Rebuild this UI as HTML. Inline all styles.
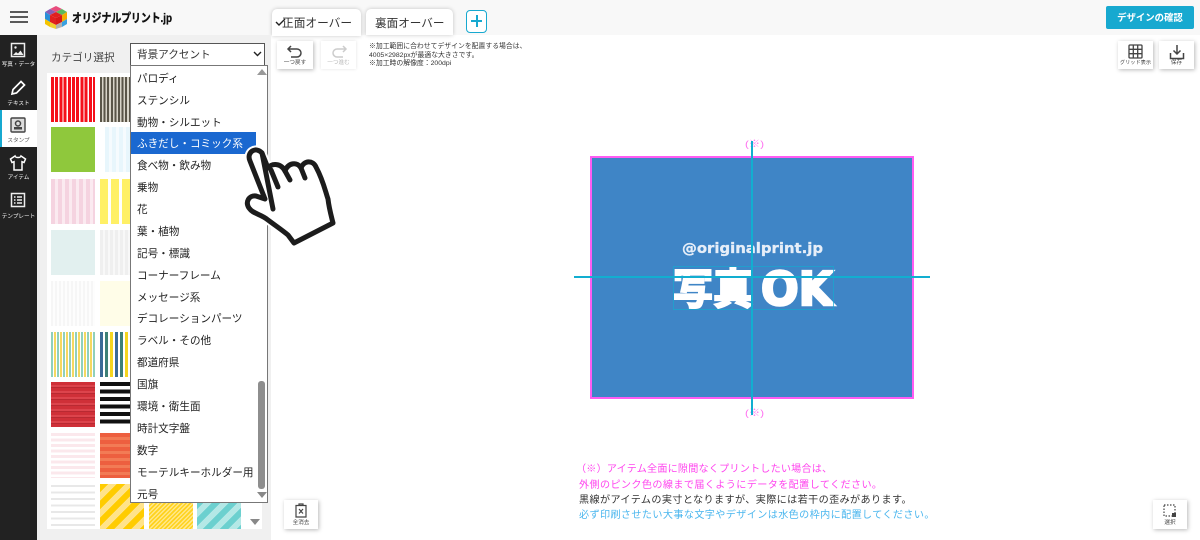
<!DOCTYPE html>
<html lang="ja"><head><meta charset="utf-8"><style>
html,body{margin:0;padding:0;width:1200px;height:540px;overflow:hidden;background:#fff}
body{position:relative;font-family:"Liberation Sans","Noto Sans CJK JP",sans-serif;color:#333}
div,span,svg{position:absolute;box-sizing:border-box}
.t{white-space:nowrap}
.tile{width:44px;height:45px}
.sl{left:0;width:37px;text-align:center;font-size:5.6px;color:#fff;white-space:nowrap;line-height:8px}
.it{left:6px;font-size:10.6px;line-height:14px;white-space:nowrap;color:#222}
.btn{background:#fff;box-shadow:1px 1px 4px rgba(0,0,0,.28);width:35px;height:28px}
.btn span{left:0;width:100%;text-align:center;font-size:5.6px;top:19px;line-height:7px;white-space:nowrap;color:#444}
.note{left:579px;font-size:10.1px;letter-spacing:.39px;line-height:14px;white-space:nowrap}
</style></head><body>
<!-- header -->
<div style="left:0;top:0;width:1200px;height:35px;background:#f8f8f8"></div>
<div style="left:10px;top:11px;width:18px;height:2px;background:#5a5a5a"></div>
<div style="left:10px;top:16px;width:18px;height:2px;background:#5a5a5a"></div>
<div style="left:10px;top:21px;width:18px;height:2px;background:#5a5a5a"></div>
<svg style="left:44px;top:5px" width="24" height="25" viewBox="0 0 24 25">
<polygon points="12,1 18,4 12,7 6,4" fill="#e84c7d"/><polygon points="6,4 12,7 6,10 1,7" fill="#8a5db5"/><polygon points="18,4 23,7 18,10 12,7" fill="#5cb85c"/>
<polygon points="12,7 18,10 12,13 6,10" fill="#e02020"/><polygon points="6,10 12,13 12,20 6,17" fill="#e02020"/><polygon points="18,10 12,13 12,20 18,17" fill="#d81818"/>
<polygon points="1,7 6,10 6,17 1,14" fill="#2a8fd8"/><polygon points="1,14 6,17 6,22 1,19" fill="#f5c400"/><polygon points="23,7 18,10 18,17 23,14" fill="#f5a800"/><polygon points="23,14 18,17 18,22 23,19" fill="#39a0e0"/>
<polygon points="6,17 12,20 12,24 6,22" fill="#f0d030"/><polygon points="18,17 12,20 12,24 18,22" fill="#b0b0b0"/></svg>
<svg style="left:72px;top:8px" width="104" height="20"><text x="0" y="14" font-size="12" font-weight="700" fill="#111" stroke="#111" stroke-width=".35" textLength="100" lengthAdjust="spacingAndGlyphs" font-family="'Liberation Sans','Noto Sans CJK JP',sans-serif">オリジナルプリント.jp</text></svg>
<!-- tabs -->
<div style="left:272px;top:9px;width:89px;height:27px;background:#fff;border-radius:5px 5px 0 0;box-shadow:0 0 4px rgba(0,0,0,.22)"></div>
<div style="left:366px;top:9px;width:87px;height:26px;background:#fff;border-radius:5px 5px 0 0;box-shadow:0 0 4px rgba(0,0,0,.22)"></div>
<svg style="left:275px;top:18px" width="12" height="10"><path d="M1 4l3 3 6-6" stroke="#222" stroke-width="1.4" fill="none"/></svg>
<div class="t" style="left:282px;top:15px;font-size:11.7px;line-height:17px;color:#333">正面オーバー</div>
<div class="t" style="left:375px;top:15px;font-size:11.6px;line-height:17px;color:#333">裏面オーバー</div>
<div style="left:466px;top:10px;width:21px;height:23px;border:1px solid #17a9d0;border-radius:4px;background:#fff"></div>
<div style="left:471px;top:20px;width:11px;height:2px;background:#17a9d0"></div>
<div style="left:476px;top:15px;width:2px;height:12px;background:#17a9d0"></div>
<div class="t" style="left:1106px;top:6px;width:88px;height:23px;background:#17a9d0;border-radius:2px;color:#fff;font-size:9.4px;font-weight:700;text-align:center;line-height:24px">デザインの確認</div>
<!-- left panel -->
<div style="left:37px;top:35px;width:234px;height:505px;background:#f0f0f0"></div>
<div style="left:47px;top:73px;width:215px;height:456px;background:#fff"></div>
<div class="t" style="left:51px;top:51px;font-size:10.6px;line-height:14px;color:#444">カテゴリ選択</div>
<!-- tiles -->
<div class="tile" style="left:51px;top:77px;background:repeating-linear-gradient(90deg,#f5101a 0 3px,#fff 3px 4.2px)"></div>
<div class="tile" style="left:100px;top:77px;background:repeating-linear-gradient(90deg,#5a5548 0 2px,#d8d4c8 2px 3.6px)"></div>
<div class="tile" style="left:51px;top:127px;background:#8fc83c"></div>
<div class="tile" style="left:105px;top:127px;width:39px;background:repeating-linear-gradient(90deg,#e8f6fc 0 4px,#f6fbfe 4px 7px)"></div>
<div class="tile" style="left:51px;top:179px;background:repeating-linear-gradient(90deg,#f5d3e0 0 4px,#fbeaf0 4px 7px)"></div>
<div class="tile" style="left:100px;top:179px;background:repeating-linear-gradient(90deg,#fff066 0 8px,#fff 8px 11px)"></div>
<div class="tile" style="left:51px;top:230px;background:#e2f0ef"></div>
<div class="tile" style="left:100px;top:230px;background:repeating-linear-gradient(90deg,#efefef 0 3px,#f8f8f8 3px 5px)"></div>
<div class="tile" style="left:51px;top:281px;background:repeating-linear-gradient(90deg,#f6f6f6 0 2px,#fdfdfd 2px 4px)"></div>
<div class="tile" style="left:100px;top:281px;background:#fffde8"></div>
<div class="tile" style="left:51px;top:332px;background:repeating-linear-gradient(90deg,#8fd0bc 0 2px,#fff 2px 3px,#f5d860 3px 5px,#fff 5px 6px)"></div>
<div class="tile" style="left:100px;top:332px;background:repeating-linear-gradient(90deg,#3b6a96 0 3px,#fff 3px 5px,#3e8076 5px 8px,#fff 8px 10px,#f5d520 10px 13px,#fff 13px 15px)"></div>
<div class="tile" style="left:51px;top:382px;background:repeating-linear-gradient(0deg,#cf3038 0 3px,#b92a32 3px 4px,#dc444c 4px 6px)"></div>
<div class="tile" style="left:100px;top:382px;background:repeating-linear-gradient(180deg,#111 0 4px,#fff 4px 7.5px)"></div>
<div class="tile" style="left:51px;top:433px;background:repeating-linear-gradient(180deg,#fbe8ec 0 3px,#fff 3px 5.5px)"></div>
<div class="tile" style="left:100px;top:433px;background:repeating-linear-gradient(180deg,#ed5f3f 0 4px,#f27b55 4px 7px)"></div>
<div class="tile" style="left:51px;top:485px;height:44px;background:repeating-linear-gradient(180deg,#e8e8e8 0 2px,#fff 2px 6.5px)"></div>
<div class="tile" style="left:100px;top:484px;background:repeating-linear-gradient(135deg,#ffcc00 0 6px,#ffe38a 6px 12px)"></div>
<div class="tile" style="left:149px;top:484px;background:repeating-linear-gradient(135deg,#ffd21e 0 1.5px,#ffe88a 1.5px 3px)"></div>
<div class="tile" style="left:197px;top:484px;background:repeating-linear-gradient(135deg,#6cd0cf 0 6px,#b4e8e6 6px 12px)"></div>
<svg style="left:250px;top:519px" width="10" height="7"><polygon points="0,0 10,0 5,6" fill="#888"/></svg>
<!-- select -->
<div style="left:130px;top:43px;width:135px;height:23px;background:#fff;border:1px solid #555"></div>
<div class="t" style="left:137px;top:48px;font-size:10.6px;line-height:14px;color:#333">背景アクセント</div>
<svg style="left:253px;top:51px" width="9" height="6"><path d="M1 1l3.5 3.5L8 1" stroke="#222" stroke-width="1.4" fill="none"/></svg>
<!-- dropdown -->
<div style="left:130px;top:65px;width:138px;height:438px;background:#fff;border:1px solid #777;overflow:hidden">
<div style="left:0;top:66px;width:125px;height:22px;background:#1a68d0"></div>
<div class="it" style="top:6px">パロディ</div>
<div class="it" style="top:28px">ステンシル</div>
<div class="it" style="top:50px">動物・シルエット</div>
<div class="it" style="top:71px;color:#fff">ふきだし・コミック系</div>
<div class="it" style="top:93px">食べ物・飲み物</div>
<div class="it" style="top:115px">乗物</div>
<div class="it" style="top:137px">花</div>
<div class="it" style="top:159px">葉・植物</div>
<div class="it" style="top:181px">記号・標識</div>
<div class="it" style="top:203px">コーナーフレーム</div>
<div class="it" style="top:225px">メッセージ系</div>
<div class="it" style="top:246px">デコレーションパーツ</div>
<div class="it" style="top:268px">ラベル・その他</div>
<div class="it" style="top:290px">都道府県</div>
<div class="it" style="top:312px">国旗</div>
<div class="it" style="top:334px">環境・衛生面</div>
<div class="it" style="top:356px">時計文字盤</div>
<div class="it" style="top:378px">数字</div>
<div class="it" style="top:400px">モーテルキーホルダー用</div>
<div class="it" style="top:422px">元号</div>
<div style="left:127px;top:315px;width:7px;height:108px;background:#8e8e8e;border-radius:3px"></div>
<svg style="left:126px;top:3px" width="10" height="7"><polygon points="5,0 10,6 0,6" fill="#999"/></svg>
<svg style="left:126px;top:426px" width="10" height="7"><polygon points="0,0 10,0 5,6" fill="#888"/></svg>
</div>
<!-- sidebar -->
<div style="left:0;top:35px;width:37px;height:505px;background:#222"></div>
<div style="left:0;top:110px;width:37px;height:37px;background:#fff"></div>
<div style="left:0;top:110px;width:2px;height:37px;background:#17a9d0"></div>
<svg style="left:9px;top:41px" width="18" height="18"><rect x="2.5" y="2.5" width="13" height="13" fill="none" stroke="#eee" stroke-width="1.5"/><circle cx="6.5" cy="6.5" r="1.2" fill="#eee"/><path d="M4 14l3-3 2 1.5 2.5-3 3 4.500z" fill="#eee"/></svg>
<div class="sl" style="top:61px">写真・データ</div>
<svg style="left:9px;top:79px" width="18" height="18"><path d="M3 15l1-4.500L12 2.500l3.500 3.500-8 8z" fill="none" stroke="#fff" stroke-width="1.700"/></svg>
<div class="sl" style="top:100px">テキスト</div>
<svg style="left:9px;top:116px" width="18" height="18"><rect x="2" y="2" width="14" height="14" rx="1" fill="#ddd" stroke="#444" stroke-width="1.4"/><circle cx="9" cy="7.500" r="2.500" fill="none" stroke="#444" stroke-width="1.500"/><rect x="5" y="11" width="8" height="2.500" fill="#444"/></svg>
<div class="sl" style="top:137px;color:#555">スタンプ</div>
<svg style="left:9px;top:154px" width="18" height="18"><path d="M6 2L1.500 5l1.500 3.500 2-.8V16h8V7.700l2 .8L16.500 5 12 2c-.5 2-5.500 2-6 0z" fill="none" stroke="#fff" stroke-width="1.500"/></svg>
<div class="sl" style="top:174px">アイテム</div>
<svg style="left:9px;top:191px" width="18" height="18"><rect x="2.500" y="2.500" width="13" height="13" fill="none" stroke="#eee" stroke-width="1.500"/><path d="M5 6h1.500M5 9h1.500M5 12h1.500M8 6h5M8 9h5M8 12h5" stroke="#eee" stroke-width="1.500"/></svg>
<div class="sl" style="top:213px">テンプレート</div>
<!-- tool buttons -->
<div class="btn" style="left:277px;top:41px;width:36px"><svg style="left:9px;top:3px" width="18" height="16"><path d="M5 2L2 5l3 3M2 5h9a3.500 3.500 0 0 1 0 8H5" fill="none" stroke="#444" stroke-width="1.500"/></svg><span>一つ戻す</span></div>
<div class="btn" style="left:321px;top:41px;box-shadow:0 0 3px rgba(0,0,0,.12)"><svg style="left:9px;top:3px" width="18" height="16"><path d="M13 2l3 3-3 3M16 5H7a3.500 3.500 0 0 0 0 8h6" fill="none" stroke="#ccc" stroke-width="1.500"/></svg><span style="color:#bbb">一つ進む</span></div>
<div class="t" style="left:369px;top:43px;font-size:6.85px;line-height:8.600px;color:#333">※加工範囲に合わせてデザインを配置する場合は、<br>4005×2982pxが最適な大きさです。<br>※加工時の解像度：200dpi</div>
<div class="btn" style="left:1118px;top:41px"><svg style="left:10px;top:3px" width="15" height="15"><rect x="1" y="1" width="13" height="13" rx="1" fill="none" stroke="#444" stroke-width="1.300"/><path d="M5.300 1v13M9.700 1v13M1 5.300h13M1 9.700h13" stroke="#444" stroke-width="1.300"/></svg><span style="font-size:5.200px">グリッド表示</span></div>
<div class="btn" style="left:1159px;top:41px"><svg style="left:10px;top:3px" width="16" height="16"><path d="M8 1v9M4.500 6.500L8 10l3.500-3.500M1.500 9v5.500h13V9" fill="none" stroke="#444" stroke-width="1.500"/></svg><span>保存</span></div>
<div class="btn" style="left:284px;top:500px;width:34px;height:29px"><svg style="left:10px;top:3px" width="14" height="15"><path d="M2 2.500h10V14H2zM5 2.500V1h4v1.500M5 6l4 4.500M9 6l-4 4.500" fill="none" stroke="#444" stroke-width="1.200"/></svg><span style="top:20px">全消去</span></div>
<div class="btn" style="left:1153px;top:500px;width:34px;height:29px"><svg style="left:10px;top:4px" width="15" height="15"><rect x="1" y="1" width="11" height="11" fill="none" stroke="#444" stroke-width="1.200" stroke-dasharray="1.500 1.500"/><rect x="9" y="9" width="4" height="4" fill="#444"/></svg><span style="top:20px">選択</span></div>
<!-- design -->
<div style="left:590px;top:156px;width:324px;height:243px;background:#3f85c6;border:2px solid #ff5cf2"></div>
<svg style="left:570px;top:130px" width="370" height="290" font-family="'Liberation Sans','Noto Sans CJK JP',sans-serif">
<text x="175" y="17" font-size="9.500" fill="#ff70f0" textLength="19" lengthAdjust="spacingAndGlyphs">(※)</text>
<text x="175" y="286" font-size="9.500" fill="#ff70f0" textLength="19" lengthAdjust="spacingAndGlyphs">(※)</text>
<text x="112" y="123" font-family="'DejaVu Sans',sans-serif" font-size="14" font-weight="700" fill="#e6eef8" stroke="#e6eef8" stroke-width=".3" textLength="141" lengthAdjust="spacingAndGlyphs">@originalprint.jp</text>
<text x="103" y="174" font-size="42" font-weight="700" fill="#fff" stroke="#fff" stroke-width="2" textLength="80" lengthAdjust="spacingAndGlyphs" font-family="'Noto Sans CJK JP',sans-serif">写真</text>
<text x="191" y="175" font-size="46" font-weight="700" fill="#fff" stroke="#fff" stroke-width="2.500" textLength="72" lengthAdjust="spacingAndGlyphs" font-family="'DejaVu Sans',sans-serif">OK</text>
<rect x="103.500" y="136.500" width="160" height="43" fill="none" stroke="#17a9d0" stroke-width=".7"/>
<rect x="181" y="11" width="2" height="274" fill="#12aed0"/>
<rect x="4" y="146" width="356" height="2" fill="#12aed0"/>
</svg>
<!-- notes -->
<div class="note" style="top:463px;left:576px;color:#ff45ee;letter-spacing:.2px">（※）アイテム全面に隙間なくプリントしたい場合は、</div>
<div class="note" style="top:479px;color:#ff45ee">外側のピンク色の線まで届くようにデータを配置してください。</div>
<div class="note" style="top:494px;color:#333">黒線がアイテムの実寸となりますが、実際には若干の歪みがあります。</div>
<div class="note" style="top:509px;color:#4ab6ee">必ず印刷させたい大事な文字やデザインは水色の枠内に配置してください。</div>
<!-- hand -->
<svg style="left:240px;top:140px" width="100" height="110" viewBox="240 140 100 110">
<g stroke-linejoin="round" stroke-linecap="round">
<path d="M250 161C246 152 256 146 262 153L268 168C272 163 281 163 285 171C288 163 297 161 301 168C304 160 313 160 316 167C323 180 325 190 328 199C329 208 331 215 333 223L294 243L288 235C282 230 276 226 268 220C261 214 253 214 249 208C245 202 249 195 256 196L265 199Z" fill="#fff" stroke="#fff" stroke-width="9"/>
<path d="M250 161C246 152 256 146 262 153L268 168C272 163 281 163 285 171C288 163 297 161 301 168C304 160 313 160 316 167C323 180 325 190 328 199C329 208 331 215 333 223L294 243L288 235C282 230 276 226 268 220C261 214 253 214 249 208C245 202 249 195 256 196L265 199Z" fill="#fff" stroke="#1c1c1c" stroke-width="5"/>
<path d="M262 153L273 209M271 170L278 187M285 171L290 180M301 168L305 178" fill="none" stroke="#1c1c1c" stroke-width="5"/>
</g></svg>
</body></html>
